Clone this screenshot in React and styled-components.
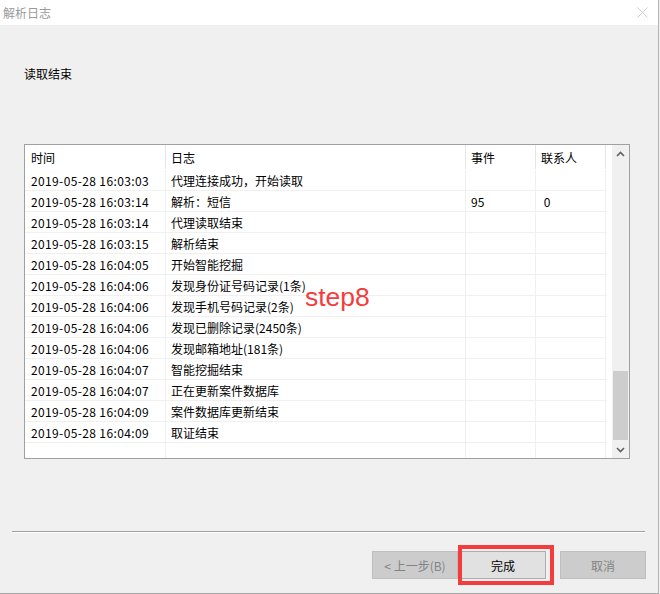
import React from 'react';
import styled, { createGlobalStyle } from 'styled-components';

const GlobalStyle = createGlobalStyle`
  html, body {
    margin: 0;
    padding: 0;
    background: #f0f0f0;
  }
  * {
    box-sizing: border-box;
  }
`;

const Window = styled.div`
  position: relative;
  width: 659px;
  height: 594px;
  display: flex;
  flex-direction: column;
  background: #f0f0f0;
  border-right: 1px solid #b4b4b4;
  border-bottom: 1px solid #a8a8a8;
  font-family: "Noto Sans CJK SC", "Liberation Sans", sans-serif;
  font-size: 12px;
  color: #000;
`;

const TitleBar = styled.div`
  height: 25px;
  flex: none;
  display: flex;
  align-items: center;
  justify-content: space-between;
  padding: 0 10px 0 3px;
  background: #fff;
  color: #9a9a9a;
  line-height: 16px;
`;

const Content = styled.div`
  flex: 1;
  display: flex;
  flex-direction: column;
`;

const Caption = styled.div`
  padding: 41px 0 0 24px;
  line-height: 16px;
`;

const Frame = styled.div`
  margin: 62px 0 0 24px;
  width: 606px;
  height: 315px;
  border: 1px solid #a0a0a0;
  background: #fff;
  display: flex;
`;

const List = styled.div`
  flex: 1;
  display: flex;
  flex-direction: column;
  overflow: hidden;
`;

const Row = styled.div`
  display: flex;
  flex: none;
  height: ${({ $head }) => ($head ? '25px' : '21px')};
  border-bottom: 1px solid ${({ $head }) => ($head ? 'transparent' : '#f0f0f0')};
  white-space: pre;
`;

const Cell = styled.div`
  width: ${({ $w }) => $w}px;
  flex: none;
  padding-left: ${({ $pad }) => $pad || 5}px;
  padding-top: ${({ $head }) => ($head ? '3px' : '2px')};
  line-height: ${({ $head }) => ($head ? '20px' : '18px')};
  letter-spacing: ${({ $spacing }) => $spacing || 0}px;
  border-right: 1px solid ${({ $head }) => ($head ? '#e5e5e5' : '#f0f0f0')};
  overflow: hidden;
`;

const Scrollbar = styled.div`
  width: 17px;
  flex: none;
  margin-left: 5px;
  background: #f0f0f0;
  display: flex;
  flex-direction: column;
`;

const Arrow = styled.div`
  height: 17px;
  flex: none;
  display: flex;
  align-items: center;
  justify-content: center;
`;

const Track = styled.div`
  flex: 1;
  display: flex;
  flex-direction: column;
  justify-content: flex-end;
  padding: 0 1px 1px;
`;

const Thumb = styled.div`
  height: 69px;
  background: #cdcdcd;
`;

const Separator = styled.div`
  margin: 72px 0 0 12px;
  width: 633px;
  height: 2px;
  border-top: 1px solid #a0a0a0;
  border-bottom: 1px solid #fff;
`;

const ButtonRow = styled.div`
  display: flex;
  padding: 18px 0 0 372px;
`;

const Button = styled.div`
  position: relative;
  width: 86px;
  height: 28px;
  margin-right: ${({ $gap }) => $gap || 0}px;
  display: flex;
  align-items: center;
  justify-content: center;
  background: ${({ $disabled }) => ($disabled ? '#cccccc' : '#e1e1e1')};
  border: 1px solid ${({ $disabled }) => ($disabled ? '#bfbfbf' : '#adadad')};
  color: ${({ $disabled }) => ($disabled ? '#838383' : '#000')};
`;

const Highlight = styled.div`
  position: absolute;
  left: -3px;
  top: -7px;
  right: -9px;
  bottom: -7px;
  border: 4px solid #f43c3c;
`;

const StepLabel = styled.div`
  position: absolute;
  left: 305px;
  top: 284px;
  font-family: "Liberation Sans", Arial, sans-serif;
  font-size: 26.5px;
  line-height: 1;
  color: #f43c3c;
`;

const columns = [
  { key: 'time', title: '时间', w: 141, pad: 6, spacing: 0.37 },
  { key: 'log', title: '日志', w: 300 },
  { key: 'event', title: '事件', w: 70 },
  { key: 'contact', title: '联系人', w: 70 },
];

const logs = [
  ['2019-05-28 16:03:03', '代理连接成功，开始读取', '', ''],
  ['2019-05-28 16:03:14', '解析：短信', '95', ' 0'],
  ['2019-05-28 16:03:14', '代理读取结束', '', ''],
  ['2019-05-28 16:03:15', '解析结束', '', ''],
  ['2019-05-28 16:04:05', '开始智能挖掘', '', ''],
  ['2019-05-28 16:04:06', '发现身份证号码记录(1条)', '', ''],
  ['2019-05-28 16:04:06', '发现手机号码记录(2条)', '', ''],
  ['2019-05-28 16:04:06', '发现已删除记录(2450条)', '', ''],
  ['2019-05-28 16:04:06', '发现邮箱地址(181条)', '', ''],
  ['2019-05-28 16:04:07', '智能挖掘结束', '', ''],
  ['2019-05-28 16:04:07', '正在更新案件数据库', '', ''],
  ['2019-05-28 16:04:09', '案件数据库更新结束', '', ''],
  ['2019-05-28 16:04:09', '取证结束', '', ''],
  ['', '', '', ''],
];

const Chevron = ({ up }) => (
  <svg width="9" height="6" viewBox="0 0 9 6">
    <path
      d={up ? 'M1 5 L4.5 1.5 L8 5' : 'M1 1 L4.5 4.5 L8 1'}
      fill="none"
      stroke="#606060"
      strokeWidth="1.6"
    />
  </svg>
);

const App = () => {
  return (
    <>
      <GlobalStyle />
      <Window>
        <TitleBar>
          <span>解析日志</span>
          <svg width="11" height="11" viewBox="0 0 11 11">
            <path d="M0.5 0.5 L10.5 10.5 M10.5 0.5 L0.5 10.5" stroke="#d0d0d0" strokeWidth="1" />
          </svg>
        </TitleBar>
        <Content>
          <Caption>读取结束</Caption>
          <Frame>
            <List>
              <Row $head>
                {columns.map((c) => (
                  <Cell key={c.key} $w={c.w} $pad={c.pad} $head>
                    {c.title}
                  </Cell>
                ))}
              </Row>
              {logs.map((r, i) => (
                <Row key={i}>
                  {columns.map((c, j) => (
                    <Cell key={c.key} $w={c.w} $pad={c.pad} $spacing={c.spacing}>
                      {r[j]}
                    </Cell>
                  ))}
                </Row>
              ))}
            </List>
            <Scrollbar>
              <Arrow>
                <Chevron up />
              </Arrow>
              <Track>
                <Thumb />
              </Track>
              <Arrow>
                <Chevron />
              </Arrow>
            </Scrollbar>
          </Frame>
          <Separator />
          <ButtonRow>
            <Button $disabled $gap={2}>&lt; 上一步(B)</Button>
            <Button $gap={14}>
              完成
              <Highlight />
            </Button>
            <Button $disabled>取消</Button>
          </ButtonRow>
        </Content>
        <StepLabel>step8</StepLabel>
      </Window>
    </>
  );
};

export default App;
